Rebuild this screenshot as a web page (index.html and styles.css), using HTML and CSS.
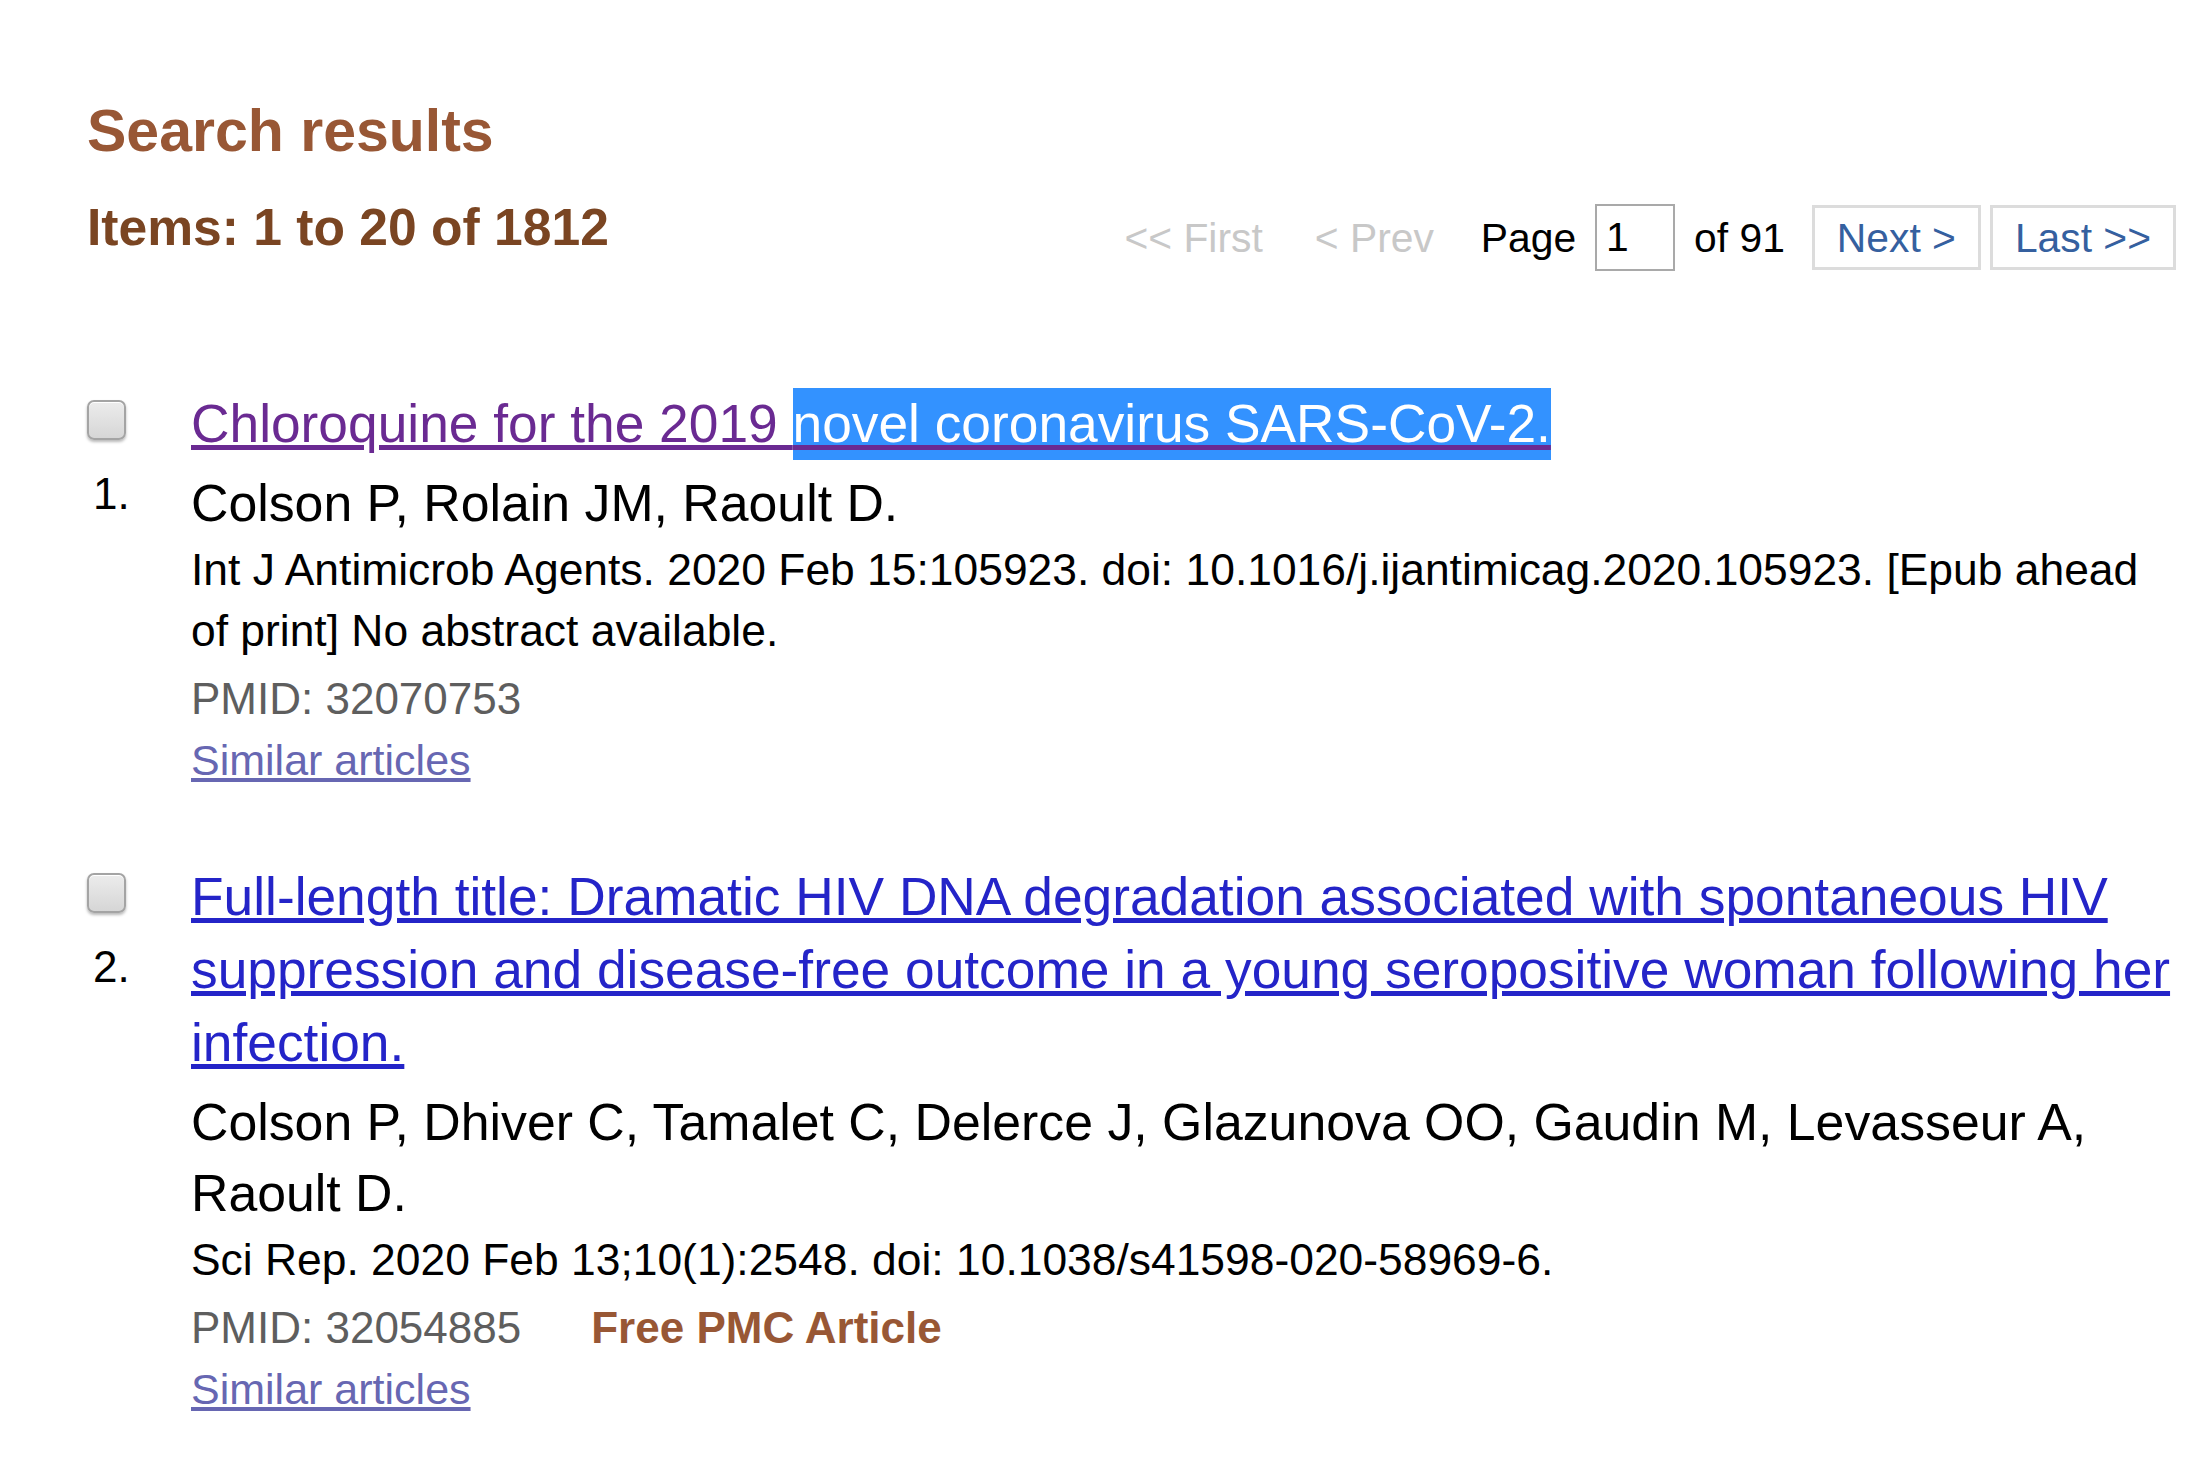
FILE: index.html
```html
<!DOCTYPE html>
<html lang="en">
<head>
<meta charset="utf-8">
<title>Search results</title>
<link rel="stylesheet" href="styles.css">
</head>
<body>
<div class="page">
  <h2 class="heading">Search results</h2>
  <div class="bar">
    <h3 class="count">Items: 1 to 20 of 1812</h3>
    <div class="pager">
      <span class="pg-disabled pg-first">&lt;&lt; First</span>
      <span class="pg-disabled pg-prev">&lt; Prev</span>
      <span class="pg-label">Page</span>
      <input class="pg-input" type="text" value="1">
      <span class="pg-of">of 91</span>
      <a class="pg-btn" href="#">Next &gt;</a>
      <a class="pg-btn" href="#">Last &gt;&gt;</a>
    </div>
  </div>

  <div class="results">
    <div class="rprt">
      <div class="rprtnum">
        <input class="cb" type="checkbox">
        <span class="num">1.</span>
      </div>
      <div class="rslt">
        <p class="ttl"><a class="ttl-link visited" href="#">Chloroquine for the 2019 <span class="sel">novel coronavirus SARS-CoV-2.</span></a></p>
        <p class="auth">Colson P, Rolain JM, Raoult D.</p>
        <p class="details">Int J Antimicrob Agents. 2020 Feb 15:105923. doi: 10.1016/j.ijantimicag.2020.105923. [Epub ahead of print] No abstract available.</p>
        <p class="aux"><span class="pmid">PMID: 32070753</span></p>
        <p class="links"><a class="similar" href="#">Similar articles</a></p>
      </div>
    </div>

    <div class="rprt">
      <div class="rprtnum">
        <input class="cb" type="checkbox">
        <span class="num">2.</span>
      </div>
      <div class="rslt">
        <p class="ttl"><a class="ttl-link" href="#">Full-length title: Dramatic HIV DNA degradation associated with spontaneous HIV suppression and disease-free outcome in a young seropositive woman following her infection.</a></p>
        <p class="auth">Colson P, Dhiver C, Tamalet C, Delerce J, Glazunova OO, Gaudin M, Levasseur A, Raoult D.</p>
        <p class="details">Sci Rep. 2020 Feb 13;10(1):2548. doi: 10.1038/s41598-020-58969-6.</p>
        <p class="aux"><span class="pmid">PMID: 32054885</span><span class="free">Free PMC Article</span></p>
        <p class="links"><a class="similar" href="#">Similar articles</a></p>
      </div>
    </div>
  </div>
</div>
</body>
</html>
```

FILE: styles.css
```css
html, body {
  margin: 0;
  padding: 0;
  background: #ffffff;
}

body {
  font-family: "Liberation Sans", Arial, sans-serif;
  color: #000000;
}

.page {
  box-sizing: border-box;
  width: 2176px;
  padding: 97px 0 0 87px;
}

.heading {
  margin: 0;
  font-size: 59px;
  line-height: 68px;
  font-weight: bold;
  color: #985735;
}

.bar {
  margin-top: 32px;
  display: flex;
  justify-content: space-between;
  align-items: flex-start;
}

.count {
  margin: 0;
  font-size: 51.6px;
  line-height: 60px;
  font-weight: bold;
  color: #7a4522;
}

.pager {
  margin-top: 7px;
  display: flex;
  align-items: center;
  font-size: 40.8px;
  line-height: 46px;
}

.pg-disabled {
  color: #c8c8c8;
}

.pg-first {
  margin-right: 52px;
}

.pg-prev {
  margin-right: 47px;
}

.pg-label {
  margin-right: 19px;
  color: #000000;
}

.pg-input {
  box-sizing: border-box;
  width: 80px;
  height: 67px;
  margin: 0 19px 0 0;
  padding: 0 0 0 9px;
  border: 2px solid #a9a9a9;
  font-family: "Liberation Sans", Arial, sans-serif;
  font-size: 40.8px;
  color: #000000;
  background: #ffffff;
  outline: none;
}

.pg-of {
  margin-right: 27px;
  color: #000000;
}

.pg-btn {
  box-sizing: border-box;
  height: 65px;
  display: flex;
  align-items: center;
  padding: 0 22px;
  border: 3px solid #dcdcdc;
  color: #35609f;
  text-decoration: none;
  background: #ffffff;
}

.pg-btn + .pg-btn {
  margin-left: 9px;
}

.results {
  margin-top: 116px;
}

.rprt {
  display: flex;
  align-items: flex-start;
}

.rprt + .rprt {
  margin-top: 69px;
}

.rprtnum {
  width: 104px;
  flex: none;
  display: flex;
  flex-direction: column;
  align-items: flex-start;
}

.cb {
  appearance: none;
  -webkit-appearance: none;
  box-sizing: border-box;
  width: 39px;
  height: 40px;
  margin: 13px 0 0 0;
  border: 2px solid #a4a4a4;
  border-radius: 7px;
  background: linear-gradient(#ececec, #d6d6d6);
  box-shadow: 0 2px 3px rgba(0, 0, 0, 0.28), inset 0 1px 0 #ffffff;
}

.num {
  margin: 23px 0 0 6px;
  font-size: 44px;
  line-height: 61px;
  color: #000000;
}

.rslt {
  flex: 1;
  min-width: 0;
}

.ttl {
  margin: 0;
  font-size: 53.3px;
  line-height: 73px;
}

.ttl-link {
  color: #2424c8;
  text-decoration: underline;
}

.ttl-link.visited {
  color: #6a2a92;
}

.sel {
  background: #3392ff;
  color: #ffffff;
  padding: 6px 0 7px;
}

.auth {
  margin: 8px 0 0;
  font-size: 51.8px;
  line-height: 71px;
}

.details {
  margin: 0;
  font-size: 44.4px;
  line-height: 61px;
}

.aux {
  margin: 7px 0 0;
  font-size: 44px;
  line-height: 61px;
  color: #5e5e5e;
}

.free {
  margin-left: 70px;
  font-weight: bold;
  color: #985735;
}

.links {
  margin: 1px 0 0;
  font-size: 43px;
  line-height: 61px;
}

.similar {
  color: #6767b2;
  text-decoration: underline;
}
```
